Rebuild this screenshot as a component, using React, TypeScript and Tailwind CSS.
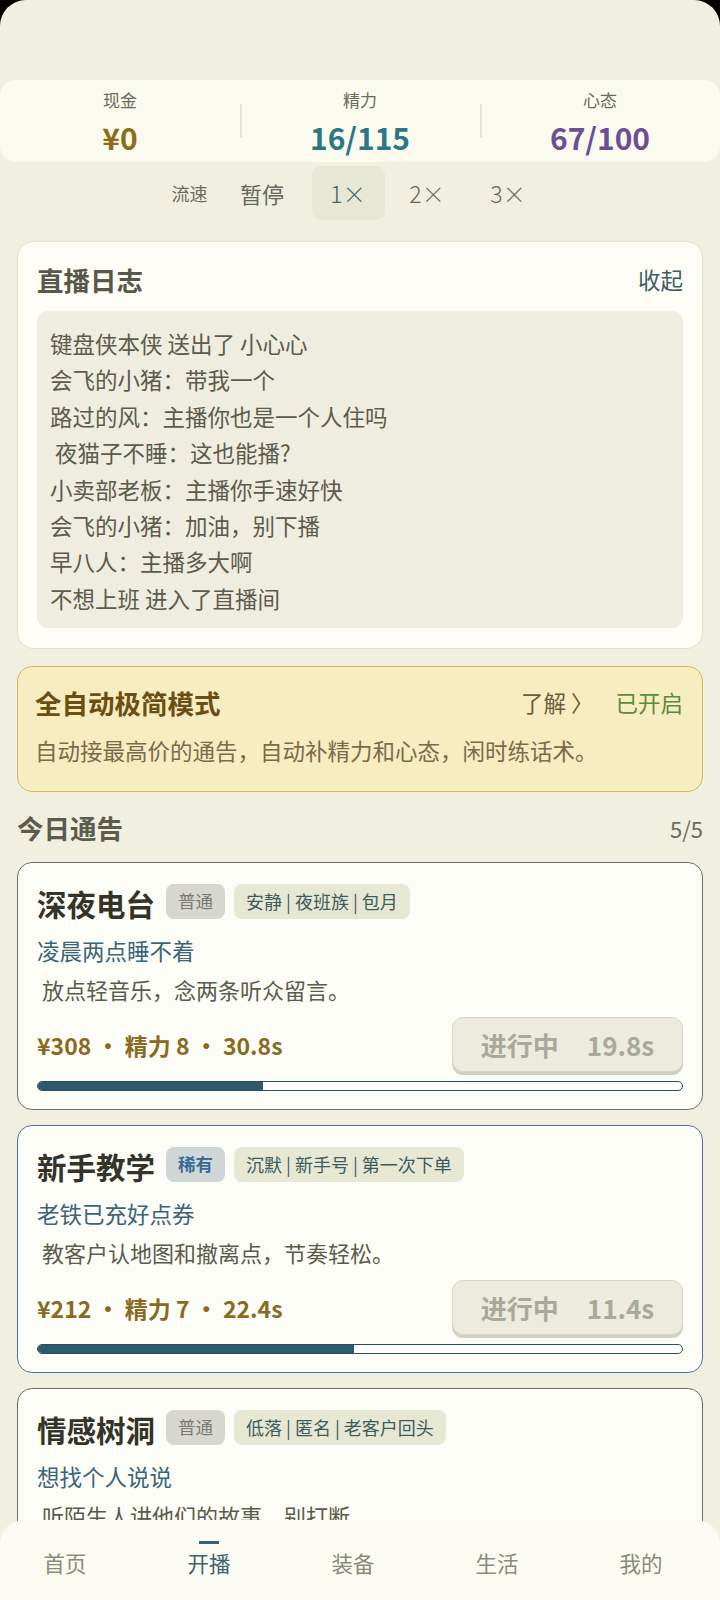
const logLines = [
  '键盘侠本侠 送出了 小心心',
  '会飞的小猪：带我一个',
  '路过的风：主播你也是一个人住吗',
  ' 夜猫子不睡：这也能播?',
  '小卖部老板：主播你手速好快',
  '会飞的小猪：加油，别下播',
  '早八人：主播多大啊',
  '不想上班 进入了直播间',
]

type Gig = {
  title: string
  rarity: 'normal' | 'rare'
  tags: string[]
  hook: string
  desc: string
  stats?: string
  remain?: string
  progress?: number
}

const gigs: Gig[] = [
  {
    title: '深夜电台',
    rarity: 'normal',
    tags: ['安静', '夜班族', '包月'],
    hook: '凌晨两点睡不着',
    desc: ' 放点轻音乐，念两条听众留言。',
    stats: '¥308 • 精力 8 • 30.8s',
    remain: '19.8s',
    progress: 35,
  },
  {
    title: '新手教学',
    rarity: 'rare',
    tags: ['沉默', '新手号', '第一次下单'],
    hook: '老铁已充好点券',
    desc: ' 教客户认地图和撤离点，节奏轻松。',
    stats: '¥212 • 精力 7 • 22.4s',
    remain: '11.4s',
    progress: 49,
  },
  {
    title: '情感树洞',
    rarity: 'normal',
    tags: ['低落', '匿名', '老客户回头'],
    hook: '想找个人说说',
    desc: ' 听陌生人讲他们的故事，别打断。',
  },
]

function StatCell({ label, value, color }: { label: string; value: string; color: string }) {
  return (
    <div className="flex flex-col items-center">
      <span className="text-[17px] leading-[24px] text-[#6b6b5c]">{label}</span>
      <span className={`mt-[6px] text-[30px] leading-[38px] font-bold ${color}`}>{value}</span>
    </div>
  )
}

function GigCard({ gig }: { gig: Gig }) {
  const border = gig.rarity === 'rare' ? 'border-[#4f729c]' : 'border-[#6f6f69]'
  return (
    <div className={`mx-[17px] rounded-[15px] border-[1.5px] ${border} bg-[#fdfdf7] px-[19px] pt-[20px] pb-[18px]`}>
      <div className="flex items-center h-[36px]">
        <span className="text-[29.5px] leading-[36px] font-bold text-[#33332a] mt-[4px]">{gig.title}</span>
        {gig.rarity === 'rare' ? (
          <span className="ml-[11px] h-[35px] px-[12px] flex items-center rounded-[8px] bg-[#cfd6d7] text-[17.5px] font-bold text-[#3b6a98]">稀有</span>
        ) : (
          <span className="ml-[11px] h-[35px] px-[12px] flex items-center rounded-[8px] bg-[#d7d7d0] text-[17.5px] text-[#7a7a70]">普通</span>
        )}
        <span className="ml-[9px] h-[35px] px-[12px] flex items-center rounded-[8px] bg-[#e7e8d4] text-[18px] text-[#3e5c5e]">
          {gig.tags.map((t, i) => (
            <span key={t} className="flex items-center">
              {i > 0 && <span className="mx-[4px]">|</span>}
              {t}
            </span>
          ))}
        </span>
      </div>
      <div className="mt-[15px] text-[22.5px] leading-[32px] text-[#3a6478]">{gig.hook}</div>
      <div className="mt-[7px] text-[22px] leading-[32px] text-[#5b5b4c] whitespace-pre">{gig.desc}</div>
      {gig.stats ? (
        <>
          <div className="mt-[12px] flex items-center justify-between">
            <span className="text-[23px] font-bold text-[#8a6a1f]">{gig.stats}</span>
            <div className="w-[231px] h-[55px] rounded-[11px] border border-[#d8d6c6] bg-[#ecebdd] shadow-[0_3px_0_#d2d0c0] flex items-center justify-center text-[26px] font-bold text-[#a9a99b]">
              <span>进行中</span>
              <span className="ml-[28px]">{gig.remain}</span>
            </div>
          </div>
          <div className="mt-[9px] h-[10px] rounded-full border-[1.5px] border-[#2c4e59] bg-white overflow-hidden">
            <div className="h-full bg-[#2d5b6b]" style={{ width: `${gig.progress}%` }} />
          </div>
        </>
      ) : (
        <div className="h-[140px]" />
      )}
    </div>
  )
}

export default function App() {
  const tabs = ['首页', '开播', '装备', '生活', '我的']
  return (
    <div className="bg-black" style={{ fontFamily: '"Noto Sans CJK SC", "Noto Sans", sans-serif' }}>
      <div className="relative h-[1600px] overflow-hidden rounded-t-[26px] bg-[#f1efe0]">
        <div className="h-[80px]" />

        {/* 顶部数值 */}
        <div className="h-[82px] rounded-[16px] bg-[#fbfaef] grid grid-cols-3 items-center pt-[2px]">
          <StatCell label="现金" value="¥0" color="text-[#8d6c17]" />
          <div className="relative">
            <div className="absolute left-0 top-[16px] h-[34px] w-[2px] bg-[#e6e4d6]" />
            <StatCell label="精力" value="16/115" color="text-[#2a7786]" />
          </div>
          <div className="relative">
            <div className="absolute left-0 top-[16px] h-[34px] w-[2px] bg-[#e6e4d6]" />
            <StatCell label="心态" value="67/100" color="text-[#6a4f98]" />
          </div>
        </div>

        {/* 流速 */}
        <div className="mt-[4px] h-[54px] flex items-center justify-center pr-[4px]">
          <span className="text-[18px] text-[#6b6b5c]">流速</span>
          <span className="ml-[18px] w-[73px] h-[54px] flex items-center justify-center text-[22px] text-[#66665a]">暂停</span>
          <span className="ml-[13px] w-[73px] h-[54px] flex items-center justify-center rounded-[9px] bg-[#e7e7d6] text-[23px] font-light text-[#3f5f66]">1×</span>
          <span className="ml-[6px] w-[73px] h-[54px] flex items-center justify-center text-[23px] font-light text-[#66665a]">2×</span>
          <span className="ml-[8px] w-[73px] h-[54px] flex items-center justify-center text-[23px] font-light text-[#66665a]">3×</span>
        </div>

        {/* 直播日志 */}
        <div className="mt-[21px] mx-[17px] rounded-[16px] border border-[#e1ddc9] bg-[#fdfdf6] px-[19px] pt-[20px] pb-[20px]">
          <div className="flex items-center justify-between h-[36px]">
            <span className="text-[26.5px] font-bold text-[#57574a]">直播日志</span>
            <span className="text-[22.5px] text-[#3d5c66]">收起</span>
          </div>
          <div className="mt-[13px] rounded-[11px] bg-[#efede0] pl-[13px] pt-[14px] pb-[12px]">
            {logLines.map((l, i) => (
              <div key={i} className="text-[22.5px] leading-[36.4px] text-[#5b5b4c] whitespace-pre">{l}</div>
            ))}
          </div>
        </div>

        {/* 全自动极简模式 */}
        <div className="mt-[17px] mx-[17px] rounded-[15px] border-[1.5px] border-[#d6b75e] bg-[#f8ecc1] px-[17px] pt-[18px] pb-[23px]">
          <div className="flex items-center h-[36px]">
            <span className="text-[26.5px] font-bold text-[#6b4f12]">全自动极简模式</span>
            <span className="ml-auto text-[22.5px] text-[#6b5d3e]">了解 〉</span>
            <span className="ml-[22px] mr-[2px] text-[22.5px] text-[#5d8a3b]">已开启</span>
          </div>
          <div className="mt-[11px] text-[22.5px] leading-[36px] text-[#7a6b4b]">自动接最高价的通告，自动补精力和心态，闲时练话术。</div>
        </div>

        {/* 今日通告 */}
        <div className="mt-[18px] mx-[17px] h-[36px] flex items-center justify-between">
          <span className="text-[26.5px] font-bold text-[#5c5c4d]">今日通告</span>
          <span className="text-[22px] text-[#6b6b5c]">5/5</span>
        </div>

        <div className="mt-[16px] flex flex-col gap-[15px]">
          {gigs.map(g => (
            <GigCard key={g.title} gig={g} />
          ))}
        </div>

        {/* 底部导航 */}
        <div className="absolute left-0 right-0 bottom-0 h-[80px] rounded-t-[24px] bg-[#fbfbf1]">
          <div className="grid grid-cols-[repeat(5,144px)] -ml-[7px] h-full">
            {tabs.map(t => {
              const active = t === '开播'
              return (
                <div key={t} className="relative flex items-center justify-center pt-[6px]">
                  {active && <div className="absolute top-[21px] w-[20px] h-[3px] bg-[#3d6470]" />}
                  <span className={`text-[21.5px] ${active ? 'text-[#3d6470]' : 'text-[#8b8b7c]'}`}>{t}</span>
                </div>
              )
            })}
          </div>
        </div>
      </div>
    </div>
  )
}
